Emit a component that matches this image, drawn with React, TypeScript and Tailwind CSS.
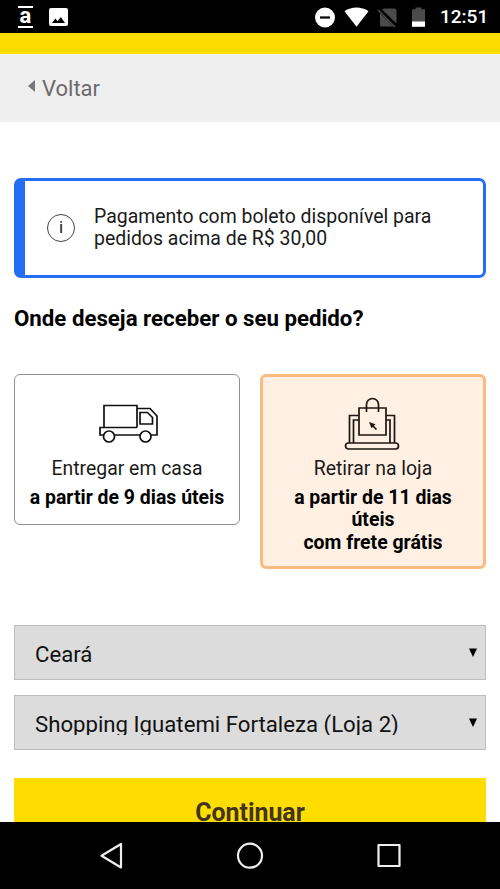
import React from 'react';

interface DeliveryOption {
    id: string;
    label: string;
    details: string[];
    icon: React.ReactNode;
    isSelected: boolean;
}

const StatusBar: React.FC = () => (
    <header className="flex h-[33px] shrink-0 items-center justify-between bg-black pr-[12px] pl-[18px] text-white">
        <div className="flex items-center gap-[16px] pt-px">
            <div className="flex h-[22px] w-[15px] flex-col items-center border-y-2 border-white">
                <span className="-mt-[5px] text-[22px] leading-[26px] font-bold">a</span>
            </div>
            <svg className="h-[18px] w-[19px]" viewBox="0 0 19 18">
                <path fill="#fff" fillRule="evenodd" d="M2 0h15a2 2 0 0 1 2 2v14a2 2 0 0 1-2 2H2a2 2 0 0 1-2-2V2a2 2 0 0 1 2-2Zm1 15h13l-4.2-6-3.2 4.3-2.2-2.7L3 15Z" />
            </svg>
        </div>
        <div className="flex items-center">
            <svg className="h-[22px] w-[112px]" viewBox="0 0 112 22">
                <circle cx="11" cy="11.5" r="10" fill="#fff" />
                <path d="M6 11.5h10" stroke="#000" strokeWidth="2.2" />
                <path d="M30.5 5.2C37.5.3 47.5.3 54.5 5.2L42.5 20.8Z" fill="#fff" />
                <path d="M70 2.5h10.5a2 2 0 0 1 2 2V17.500L68 3.500ZM66 7.500 79.500 20.500H67.500A1.500 1.500 0 0 1 66 19Z" fill="#4b4b4b" />
                <path d="m64 4 17 17" stroke="#4b4b4b" strokeWidth="1.6" />
                <path d="M99 3.2h2.5V1.5h6v1.7h3.5V16H98V4.2a1 1 0 0 1 1-1Z" fill="#4b4b4b" />
                <path d="M98 15.5h13v5.3H98Z" fill="#fff" />
            </svg>
            <span className="mt-px ml-[14px] w-[48px] text-[19px] leading-6 font-medium whitespace-nowrap">12:51</span>
        </div>
    </header>
);

const TruckIcon: React.FC = () => (
    <svg className="ml-[3px] h-[40px] w-[60px]" viewBox="0 0 60 40" fill="none" stroke="#111" strokeWidth="1.7">
        <path d="M5 23.5V1.5h33v22M5 23.5h33M5 23.5H1V31h3.5M15.5 31H41M38 4.5h13l7 7.5V31h-6" />
        <path d="M41 8.5h7.5l5 5v6.500H41Z" />
        <circle cx="10" cy="32.5" r="5.5" />
        <circle cx="46.5" cy="32.5" r="5.5" />
    </svg>
);

const StoreIcon: React.FC = () => (
    <svg className="mr-[2px] h-[54px] w-[56px]" viewBox="0 0 56 54" fill="none" stroke="#1c1713" strokeWidth="1.7">
        <rect x="1.5" y="46" width="53" height="6" rx="3" />
        <path d="M5.5 46V18.5H15M42 18.5h8.5V46M9.5 46V23H15M42 23h4v23" />
        <path d="M15 11h27v27H15Z" />
        <path d="M22.5 15V7.5a6 6 0 0 1 12 0V15" />
        <path d="m27 27 5.5 5.5" />
        <path d="m25 25 6.5 2.300-4 4Z" fill="#1c1713" stroke="none" />
    </svg>
);

const options: DeliveryOption[] = [
    { id: 'home', label: 'Entregar em casa', details: ['a partir de 9 dias úteis'], icon: <TruckIcon />, isSelected: false },
    { id: 'store', label: 'Retirar na loja', details: ['a partir de 11 dias', 'úteis', 'com frete grátis'], icon: <StoreIcon />, isSelected: true },
];

const OptionCard: React.FC<{ option: DeliveryOption }> = ({ option }) => (
    <button
        className={`flex flex-col items-center rounded-[6px] text-black ${
            option.isSelected ? 'h-[195px] border-[3px] border-[#f9bb80] bg-[#fff0e3]' : 'h-[151px] border border-[#8f8f8f] bg-white px-[2px] pt-[2px]'
        }`}
    >
        <div className={`flex h-[80px] justify-center ${option.isSelected ? 'pt-[20px]' : 'pt-[27px]'}`}>{option.icon}</div>
        <span className="text-[19.4px] leading-[24px] text-[#1a1a1a]">{option.label}</span>
        <div className="mt-[6px] text-[19.45px] leading-[22.3px] font-bold">
            {option.details.map((line) => (
                <p key={line}>{line}</p>
            ))}
        </div>
    </button>
);

const SelectField: React.FC<{ value: string }> = ({ value }) => (
    <button className="flex h-[55px] w-full items-center justify-between border border-[#bdbdbd] bg-[#dcdcdc] pr-[8px] pl-[20px] text-left text-[#111]">
        <span className="mt-[2px] h-[23px] overflow-hidden text-[22.2px] leading-[24px]">{value}</span>
        <svg className="mb-px h-[9px] w-[8px]" viewBox="0 0 8 9">
            <path d="M0 .5h8L4 9Z" fill="#000" />
        </svg>
    </button>
);

const NavigationBar: React.FC = () => (
    <nav className="flex h-[67px] shrink-0 bg-black">
        <svg className="h-[67px] w-[500px]" viewBox="0 0 500 67" fill="none" stroke="#eee" strokeWidth="2.2" strokeLinejoin="round">
            <path d="M121 22v23.5L101.5 33.7Z" />
            <circle cx="250" cy="33.7" r="12" />
            <rect x="378.5" y="23" width="21" height="21" />
        </svg>
    </nav>
);

export default function App() {
    return (
        <div className="flex h-[889px] w-[500px] flex-col overflow-hidden bg-white font-['Roboto',sans-serif]">
            <StatusBar />
            <div className="h-[21px] shrink-0 bg-[#fddc00]" />
            <div className="flex h-[68px] shrink-0 items-center bg-[#efefef] pl-[28px] text-[#6b6b6b]">
                <svg className="mb-[5px] h-[12px] w-[7px]" viewBox="0 0 7 12">
                    <path d="M7 0v12L0 6Z" fill="#777" />
                </svg>
                <span className="mt-px ml-[7px] text-[22px] leading-[26px]">Voltar</span>
            </div>

            <main className="flex min-h-0 flex-1 flex-col overflow-hidden px-[14px]">
                <div className="mt-[56px] flex h-[100px] shrink-0 rounded-[7px] border-[3px] border-l-[11px] border-[#226cf6] pt-[24px] pl-[22px]">
                    <div className="mt-[9px] flex h-[28px] w-[28px] items-center justify-center rounded-full border border-[#444] text-[17px] text-[#222]">i</div>
                    <p className="mt-px ml-[19px] text-[19.45px] leading-[22px] text-[#1a1a1a]">
                        Pagamento com boleto disponível para
                        <br />
                        pedidos acima de R$ 30,00
                    </p>
                </div>

                <h1 className="mt-[27px] text-[22.25px] leading-[26px] font-bold text-black">Onde deseja receber o seu pedido?</h1>

                <div className="mt-[43px] grid h-[195px] shrink-0 grid-cols-2 items-start gap-[20px]">
                    {options.map((option) => (
                        <OptionCard key={option.id} option={option} />
                    ))}
                </div>

                <div className="mt-[56px] flex shrink-0 flex-col gap-[15px]">
                    <SelectField value="Ceará" />
                    <SelectField value="Shopping Iguatemi Fortaleza (Loja 2)" />
                </div>

                <button className="mt-[28px] flex h-[69px] shrink-0 items-center justify-center bg-[#ffdd00] text-[24.9px] font-bold text-[#40341c]">Continuar</button>
            </main>
            <NavigationBar />
        </div>
    );
}
